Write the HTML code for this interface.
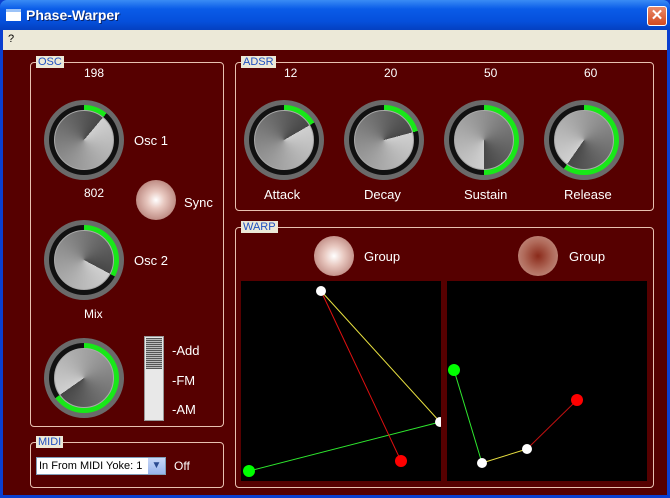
<!DOCTYPE html>
<html><head><style>
*{margin:0;padding:0;box-sizing:border-box}
body{width:670px;height:498px;overflow:hidden;background:#0a3fd0;font-family:"Liberation Sans",sans-serif;position:relative}
.title{position:absolute;left:0;top:0;width:670px;height:30px;background:linear-gradient(#3a8cf5,#0a5ce8 30%,#0550dc 70%,#0440c0);border-radius:7px 7px 0 0}
.title .t{position:absolute;left:26px;top:7px;color:#fff;font-weight:bold;font-size:14px;text-shadow:1px 1px #0a246a}
.ico{position:absolute;left:6px;top:9px;width:15px;height:12px;background:#fff;border-top:3px solid #9cc3f8}
.close{position:absolute;left:647px;top:6px;width:20px;height:20px;background:linear-gradient(#e88a6a,#d34a20);border:1px solid #fff;border-radius:3px;color:#fff;font-size:15px;font-weight:bold;text-align:center;line-height:18px}
.menu{position:absolute;left:3px;top:30px;width:664px;height:20px;background:#ece9d8;font-size:11px;padding:3px 5px}
.main{position:absolute;left:3px;top:50px;width:664px;height:445px;background:#560000}
.box{position:absolute;border:1px solid #e8c0b0;border-radius:4px}
.lab{position:absolute;background:#ece9d8;color:#2050c0;font-size:11px;padding:0 2px;line-height:12px}
.txt{position:absolute;color:#fff;font-size:12px}
.knob{position:absolute;width:80px;height:80px;border-radius:50%;background:#6a6a6a}
.knob .r{position:absolute;left:5px;top:5px;width:70px;height:70px;border-radius:50%}
.knob .i{position:absolute;left:10px;top:10px;width:60px;height:60px;border-radius:50%;border:1px solid #aaa}
.led{position:absolute;width:40px;height:40px;border-radius:50%}
</style></head><body>
<div class="title"><div class="ico"></div><div class="t">Phase-Warper</div><div class="close">✕</div></div>
<div class="menu">?</div>
<div class="main"></div>

<div class="box" style="left:30px;top:62px;width:194px;height:365px"></div>
<div class="lab" style="left:36px;top:56px">OSC</div>
<div class="box" style="left:235px;top:62px;width:419px;height:149px"></div>
<div class="lab" style="left:241px;top:56px">ADSR</div>
<div class="box" style="left:235px;top:227px;width:419px;height:261px"></div>
<div class="lab" style="left:241px;top:221px">WARP</div>
<div class="box" style="left:30px;top:442px;width:194px;height:46px"></div>
<div class="lab" style="left:36px;top:436px">MIDI</div>

<div id="k"></div>
<script>
var ks=[[84,140,40],[84,260,118],[84,378,235],[284,140,60],[384,140,75],[484,140,180],[584,140,215]];
var h='';
ks.forEach(function(k){
 var v=k[2];
 h+='<div class="knob" style="left:'+(k[0]-40)+'px;top:'+(k[1]-40)+'px">'+
 '<div class="r" style="background:conic-gradient(#18e818 0deg '+v+'deg,#111 '+v+'deg 360deg)"></div>'+
 '<div class="i" style="background:conic-gradient(from '+v+'deg,#d0d0d0,#909090 50%,#474747 100%)"></div></div>';
});
document.getElementById('k').outerHTML=h;
</script>

<div class="txt" style="left:84px;top:66px">198</div>
<div class="txt" style="left:134px;top:133px;font-size:13px">Osc 1</div>
<div class="txt" style="left:84px;top:186px">802</div>
<div class="led" style="left:136px;top:180px;background:radial-gradient(circle at 50% 50%,#fff 0%,#e8c8c0 30%,#a06058 100%)"></div>
<div class="txt" style="left:184px;top:195px;font-size:13px">Sync</div>
<div class="txt" style="left:134px;top:253px;font-size:13px">Osc 2</div>
<div class="txt" style="left:84px;top:307px">Mix</div>
<div style="position:absolute;left:144px;top:336px;width:20px;height:85px;background:#e8e8e8;border:1px solid #999"></div>
<div style="position:absolute;left:146px;top:338px;width:16px;height:31px;background:repeating-linear-gradient(#555 0 1px,#bbb 1px 2px)"></div>
<div class="txt" style="left:172px;top:343px;font-size:13px">-Add</div>
<div class="txt" style="left:172px;top:373px;font-size:13px">-FM</div>
<div class="txt" style="left:172px;top:402px;font-size:13px">-AM</div>

<div style="position:absolute;left:36px;top:457px;width:130px;height:18px;background:#fff;border:1px solid #7f9db9;font-size:11px;padding:2px 2px;white-space:nowrap;overflow:hidden">In From MIDI Yoke: 1</div>
<div style="position:absolute;left:148px;top:458px;width:17px;height:16px;background:linear-gradient(#c8d8f8,#98b4ec);color:#2a4a90;font-size:10px;text-align:center;line-height:16px">&#9660;</div>
<div class="txt" style="left:174px;top:459px">Off</div>

<div class="txt" style="left:284px;top:66px">12</div>
<div class="txt" style="left:384px;top:66px">20</div>
<div class="txt" style="left:484px;top:66px">50</div>
<div class="txt" style="left:584px;top:66px">60</div>
<div class="txt" style="left:264px;top:187px;font-size:13px">Attack</div>
<div class="txt" style="left:364px;top:187px;font-size:13px">Decay</div>
<div class="txt" style="left:464px;top:187px;font-size:13px">Sustain</div>
<div class="txt" style="left:564px;top:187px;font-size:13px">Release</div>

<div class="led" style="left:314px;top:236px;background:radial-gradient(circle,#fff 0%,#e8c8c0 35%,#a86860 100%)"></div>
<div class="txt" style="left:364px;top:249px;font-size:13px">Group</div>
<div class="led" style="left:518px;top:236px;background:radial-gradient(circle,#8a2a1a 0%,#b06a5a 50%,#c89a90 100%)"></div>
<div class="txt" style="left:569px;top:249px;font-size:13px">Group</div>

<svg style="position:absolute;left:0;top:0" width="670" height="498">
<rect x="241" y="281" width="200" height="200" fill="#000"/>
<rect x="447" y="281" width="200" height="200" fill="#000"/>
<line x1="249" y1="471" x2="440" y2="422" stroke="#2ee82e"/>
<line x1="321" y1="291" x2="401" y2="461" stroke="#e01010"/>
<line x1="321" y1="291" x2="440" y2="422" stroke="#e8e040"/>
<circle cx="321" cy="291" r="5" fill="#fff"/>
<circle cx="440" cy="422" r="5" fill="#fff"/>
<circle cx="401" cy="461" r="6" fill="#f00"/>
<circle cx="249" cy="471" r="6" fill="#0f0"/>
<rect x="441" y="281" width="6" height="200" fill="#560000"/>
<line x1="454" y1="370" x2="482" y2="463" stroke="#2ee82e"/>
<line x1="482" y1="463" x2="527" y2="449" stroke="#e8e040"/>
<line x1="527" y1="449" x2="577" y2="400" stroke="#c01010"/>
<circle cx="454" cy="370" r="6" fill="#0f0"/>
<circle cx="482" cy="463" r="5" fill="#fff"/>
<circle cx="527" cy="449" r="5" fill="#fff"/>
<circle cx="577" cy="400" r="6" fill="#f00"/>
</svg>
</body></html>
